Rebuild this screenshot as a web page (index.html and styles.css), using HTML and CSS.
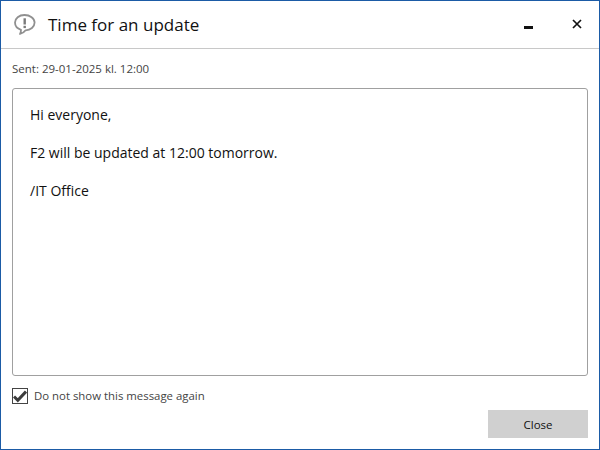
FILE: index.html
```html
<!DOCTYPE html>
<html lang="en">
<head>
<meta charset="utf-8">
<title>Time for an update</title>
<link rel="stylesheet" href="styles.css">
</head>
<body>
<div class="window">
  <header class="titlebar">
    <svg class="bubble" width="26" height="26" viewBox="0 0 26 26" fill="none">
      <path d="M12.500 3C7 3 3 6.300 3 10.600c0 3.400 2.500 6.100 6 7.200 0 1.600-.3 3-1 4.200 2.400-.6 4.300-1.900 5.600-3.700 5-.2 9-3.500 9-7.700C22.600 6.300 18 3 12.500 3z" stroke="#909090" stroke-width="1.800" stroke-linejoin="round"/>
      <path d="M12.700 6.300v6.200" stroke="#7a7a7a" stroke-width="2.400"/>
      <path d="M12.700 13.800v2.300" stroke="#7a7a7a" stroke-width="2.400"/>
    </svg>
    <h1 class="title">Time for an update</h1>
    <div class="controls">
      <svg class="minimize" width="9" height="3" viewBox="0 0 9 3"><rect width="9" height="3" fill="#111"/></svg>
      <svg class="close-x" width="10" height="10" viewBox="0 0 10 10"><path d="M1 1l8 8M9 1L1 9" stroke="#111" stroke-width="1.700"/></svg>
    </div>
  </header>
  <main class="content">
    <p class="sent">Sent: 29-01-2025 kl. 12:00</p>
    <div class="message">
      <p>Hi everyone,</p>
      <p>F2 will be updated at 12:00 tomorrow.</p>
      <p>/IT Office</p>
    </div>
    <label class="check">
      <span class="box"><svg width="14" height="14" viewBox="0 0 14 14"><path d="M1 7.500l3.800 3.800L13 2.500" fill="none" stroke="#3c3c3c" stroke-width="3"/></svg></span>
      <span>Do not show this message again</span>
    </label>
    <div class="actions"><button class="close-btn" type="button">Close</button></div>
  </main>
</div>
</body>
</html>
```
FILE: styles.css
```css
* { box-sizing: border-box; }
html, body { margin: 0; height: 100%; }
body { font-family: "Open Sans", "Noto Sans", sans-serif; background: #fff; overflow: hidden; }
.window {
  width: 600px; height: 450px;
  border: 1px solid #1b5ba6;
  display: flex; flex-direction: column;
  background: #fff;
}
.titlebar {
  height: 48px; flex: none;
  display: flex; align-items: center;
  padding-left: 11px;
  border-bottom: 1px solid #c8c8c8;
}
.bubble { flex: none; }
.title { margin: 0 0 0 10px; font-size: 17px; font-weight: 400; color: #111; }
.controls { margin-left: auto; display: flex; align-items: center; gap: 39px; padding-right: 17px; }
.minimize { margin-top: 6px; }
.close-x { margin-top: -1px; }
.content { flex: 1; display: flex; flex-direction: column; padding: 0 11px; min-height: 0; }
.sent { margin: 12px 0 0; font-size: 11.500px; line-height: 16px; color: #444; }
.message {
  height: 288px; margin-top: 11px;
  border: 1px solid #a0a0a0; border-radius: 3px;
  padding: 16px 17px; font-size: 14px; line-height: 19px; color: #111;
}
.message p { margin: 0 0 19px; }
.check { display: flex; align-items: center; gap: 6px; margin-top: 12px; font-size: 11.400px; line-height: 16px; color: #444; }
.box { width: 16px; height: 16px; border: 1px solid #444; display: flex; align-items: center; justify-content: center; }
.actions { display: flex; justify-content: flex-end; margin-top: 6px; }
.close-btn {
  width: 100px; height: 28px; border: 0; background: #d0d0d0;
  font: inherit; font-size: 11.500px; color: #111; padding: 0;
}
```
